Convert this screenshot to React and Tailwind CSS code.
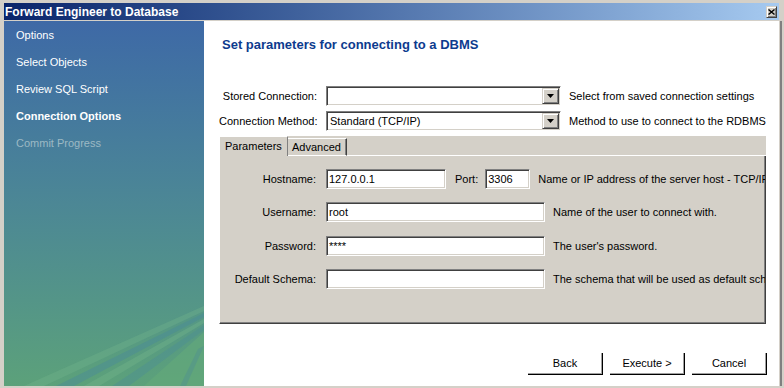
import React from "react";

const inset =
    "bg-white border border-t-[#808080] border-l-[#808080] border-b-white border-r-white shadow-[inset_1px_1px_0_#404040,inset_-1px_-1px_0_#d4d0c8]";

const raised =
    "bg-[#d4d0c8] border border-t-[#d4d0c8] border-l-[#d4d0c8] border-b-[#404040] border-r-[#404040] shadow-[inset_1px_1px_0_#ffffff,inset_-1px_-1px_0_#808080]";

function Combo({ value }) {
    return (
        <div className={`${inset} w-[235px] h-[20px] flex items-center`}>
            <span className="flex-1 pl-[3px] truncate">{value}</span>
            <div className={`${raised} w-[17px] h-[16px] mr-[1px] flex items-center justify-center`}>
                <svg width="7" height="4" viewBox="0 0 7 4">
                    <polygon points="0,0 7,0 3.5,4" fill="#000" />
                </svg>
            </div>
        </div>
    );
}

function Field({ label, children, help, className = "" }) {
    return (
        <div className={`flex items-center h-[20px] whitespace-nowrap ${className}`}>
            <div className="w-[106px] pr-[10px] text-right shrink-0">{label}</div>
            {children}
            <span className="ml-[8px]">{help}</span>
        </div>
    );
}

function WizButton({ children }) {
    return (
        <button className="w-[75px] h-[22px] bg-white border-r border-b border-r-black border-b-black shadow-[inset_-1px_-1px_0_#a0a0a0] text-[11px] text-black">
            {children}
        </button>
    );
}

export default function App() {
    const steps = [
        { name: "Options", state: "done" },
        { name: "Select Objects", state: "done" },
        { name: "Review SQL Script", state: "done" },
        { name: "Connection Options", state: "active" },
        { name: "Commit Progress", state: "todo" },
    ];

    return (
        <div className="w-[784px] h-[388px] bg-[#d4d0c8] pt-[3px] pl-[4px] pb-[2px] flex flex-col overflow-hidden font-['Liberation_Sans',Arial,sans-serif] text-[11px] text-black">
            {/* Title bar */}
            <div className="h-[17px] mr-[5px] bg-gradient-to-r from-[#0a246a] to-[#a6caf0] flex items-center justify-between pl-[1px] pr-[2px] shrink-0">
                <span className="text-white font-bold text-[12px]">Forward Engineer to Database</span>
                <div className={`${raised} w-[11px] h-[12px] flex items-center justify-center`}>
                    <svg width="7" height="6" viewBox="0 0 7 6">
                        <path d="M0.5 0.5 L6.5 5.5 M6.5 0.5 L0.5 5.5" stroke="#000" strokeWidth="1.4" />
                    </svg>
                </div>
            </div>
            <div className="h-[1px] shrink-0" />

            <div className="flex flex-1 min-h-0">
                {/* Sidebar */}
                <div className="relative w-[200px] shrink-0 pt-[1px] bg-gradient-to-b from-[#3e69a6] via-[#4c8795] to-[#5ca17a] overflow-hidden">
                    {steps.map((s) => (
                        <div
                            key={s.name}
                            className={`h-[27px] flex items-center pl-[12px] ${
                                s.state === "active"
                                    ? "text-white font-bold"
                                    : s.state === "todo"
                                    ? "text-[#9cb9c4]"
                                    : "text-white"
                            }`}
                        >
                            {s.name}
                        </div>
                    ))}
                    <svg className="absolute right-0 bottom-0" width="200" height="82" viewBox="0 0 200 82">
                        <polygon points="200,2 200,7 40,82 20,82" fill="#74b48c" opacity="0.35" />
                        <polygon points="200,9 200,13 70,82 52,82" fill="#4a8a98" opacity="0.45" />
                        <polygon points="200,15 200,19 95,82 80,82" fill="#73b48a" opacity="0.4" />
                        <polygon points="200,21 200,26 125,82 108,82" fill="#4b8b96" opacity="0.4" />
                        <polygon points="200,28 200,82 140,82" fill="#64aa79" opacity="0.6" />
                        <polygon points="194,45 200,42 182,82 176,82" fill="#4f9090" opacity="0.45" />
                    </svg>
                </div>

                {/* Content */}
                <div className="w-[575px] shrink-0 bg-white flex flex-col pl-[15px] pr-[13px] overflow-hidden">
                    <h1 className="mt-[16px] pl-[3px] leading-[15px] text-[13px] font-bold text-[#0d3b8e]">
                        Set parameters for connecting to a DBMS
                    </h1>

                    <div className="mt-[34px] flex flex-col gap-[5px] whitespace-nowrap">
                        <div className="flex items-center">
                            <div className="w-[98px] text-right">Stored Connection:</div>
                            <div className="ml-[9px]">
                                <Combo value="" />
                            </div>
                            <span className="ml-[8px]">Select from saved connection settings</span>
                        </div>
                        <div className="flex items-center">
                            <div className="w-[98px] text-right">Connection Method:</div>
                            <div className="ml-[9px]">
                                <Combo value="Standard (TCP/IP)" />
                            </div>
                            <span className="ml-[8px]">Method to use to connect to the RDBMS</span>
                        </div>
                    </div>

                    {/* Tabs */}
                    <div className="mt-[5px] w-[547px] h-[188px] bg-[#d4d0c8] flex flex-col">
                        <div className="h-[20px] flex items-end shrink-0">
                            <div className="h-[20px] w-[69px] border-l border-t border-white border-r border-r-[#808080] pl-[5px] flex items-center">
                                Parameters
                            </div>
                            <div className="h-[18px] w-[59px] border-t border-t-white border-r border-r-[#404040] shadow-[inset_-1px_0_0_#808080] pl-[4px] flex items-center border-b border-b-white">
                                Advanced
                            </div>
                            <div className="flex-1 h-[1px] bg-white" />
                        </div>
                        <div className="flex-1 min-w-0 border-l border-l-white border-r border-r-[#404040] border-b border-b-[#404040] shadow-[inset_-1px_-1px_0_#808080] overflow-hidden pt-[13px] pr-[2px]">
                            <Field label="Hostname:" help="Name or IP address of the server host - TCP/IP">
                                <div className={`${inset} w-[120px] h-[20px] flex items-center pl-[2px] shrink-0`}>127.0.0.1</div>
                                <span className="ml-[9px]">Port:</span>
                                <div className={`${inset} ml-[7px] w-[45px] h-[20px] flex items-center pl-[2px] shrink-0`}>3306</div>
                            </Field>
                            <Field label="Username:" help="Name of the user to connect with." className="mt-[13px]">
                                <div className={`${inset} w-[219px] h-[20px] flex items-center pl-[2px] shrink-0`}>root</div>
                            </Field>
                            <Field label="Password:" help="The user's password." className="mt-[14px]">
                                <div className={`${inset} w-[219px] h-[20px] flex items-center pl-[2px] shrink-0`}>****</div>
                            </Field>
                            <Field label="Default Schema:" help="The schema that will be used as default schema" className="mt-[13px]">
                                <div className={`${inset} w-[219px] h-[20px] shrink-0`} />
                            </Field>
                        </div>
                    </div>

                    {/* Wizard buttons */}
                    <div className="mt-[29px] flex justify-end gap-[7px] mr-[-1px]">
                        <WizButton>Back</WizButton>
                        <WizButton>Execute &gt;</WizButton>
                        <WizButton>Cancel</WizButton>
                    </div>
                </div>
                <div className="w-[1px] bg-[#d4d0c8] shrink-0" />
                <div className="w-[2px] bg-[#808080] shrink-0" />
                <div className="w-[2px] bg-[#d4d0c8] shrink-0" />
            </div>
        </div>
    );
}
